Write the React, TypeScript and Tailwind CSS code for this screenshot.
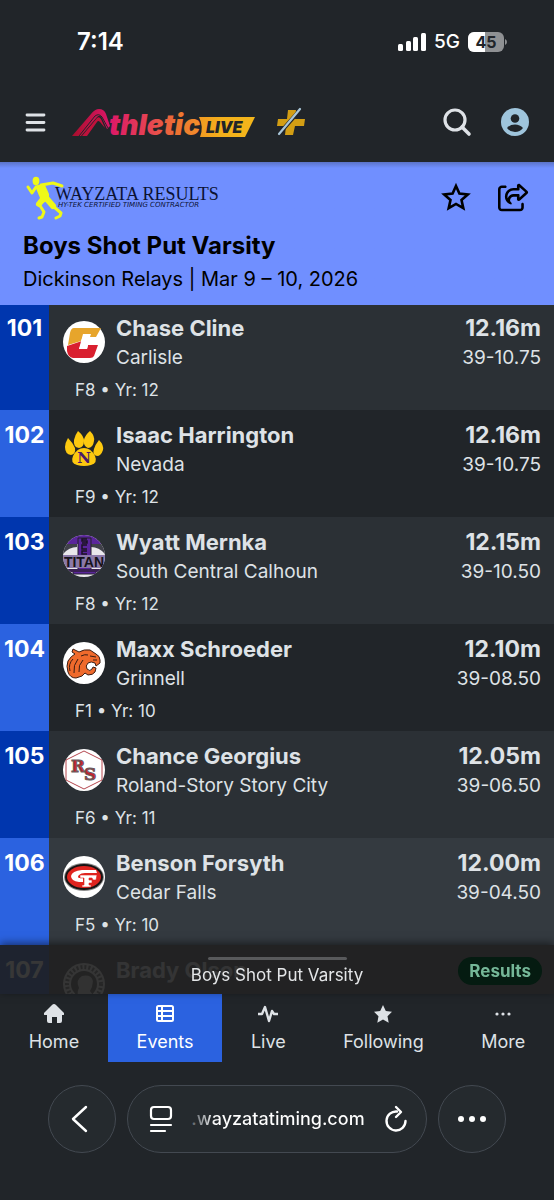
import React, { useState } from "react";
import { FaRegShareFromSquare } from "react-icons/fa6";

interface IAthlete {
    place: number;
    name: string;
    school: string;
    meta: string;
    mark: string;
    imperial: string;
    logo: React.ReactNode;
}

enum NavTab {
    Home = "Home",
    Events = "Events",
    Live = "Live",
    Following = "Following",
    More = "More"
}

function CarlisleLogo() {
    return (
        <svg viewBox="0 0 42 42" className="size-[42px]">
            <circle cx="21" cy="21" r="21" fill="#fff" />
            <path d="M11 7h27l-5 9h-6l1-3h-7l-3 7-13 4 2-12q1-5 4-5z" fill="#e7a52b" />
            <path d="M4 25l15-5-3 8h8l1-4h10l-4 11q-1 2-4 2H10q-5-1-6-7z" fill="#d9202f" />
            <path d="M20 13h7l-1 4h8l-2 7h-7l-1 4h-8z" fill="#fff" />
        </svg>
    );
}

function NevadaLogo() {
    return (
        <svg viewBox="0 0 42 42" className="size-[42px]">
            <g fill="#fdc90f">
                <path d="M5 10q5 5 7 10 1 6-4 7-6-1-6-8 0-4 3-9z" />
                <path d="M15 3q6 5 6 10 0 6-5 7-6-1-5-8 1-5 4-9z" />
                <path d="M27 3q5 5 4 10-1 7-6 7-5-2-4-8 1-5 6-9z" />
                <path d="M36 12q5 5 4 10-2 6-6 6-5-1-3-7 1-4 5-9z" />
                <path d="M21 20q7 0 11 8 3 7-4 9-7 2-14 0-7-2-4-9 4-8 11-8z" />
            </g>
            <text x="21" y="35" textAnchor="middle" fill="#4b1a6b" className="font-['DejaVu_Serif',serif] text-[15px] font-bold">N</text>
        </svg>
    );
}

function TitanLogo() {
    return (
        <svg viewBox="0 0 42 42" className="size-[42px]">
            <clipPath id="titanClip"><circle cx="21" cy="21" r="21" /></clipPath>
            <g clipPath="url(#titanClip)">
                <rect width="42" height="42" fill="#e9e7ec" />
                <path d="M0 0h42v9H0z" fill="#5a259b" />
                <path d="M0 9h14v3q-8 0-14 7zM42 9H28v3q8 0 14 7z" fill="#40414a" />
                <path d="M15 3h13v33h5v3H10v-3h5z" fill="#5a259b" stroke="#25212c" />
                <path d="M0 20h42v13H0z" fill="#8b79a8" />
                <path d="M3 34h36v3H3z" fill="#392052" />
                <text x="21" y="32" textAnchor="middle" fill="#15121b" className="font-['Liberation_Sans',sans-serif] text-[14px] font-bold">TITAN</text>
                <g fill="none" stroke="#1b1322" strokeWidth="1.5">
                    <path d="M24 4h-5v2h5v2h-5M24 10h-5v4h5M24 16h-5v3h5" />
                </g>
            </g>
        </svg>
    );
}

function GrinnellLogo() {
    return (
        <svg viewBox="0 0 42 42" className="size-[42px]">
            <circle cx="21" cy="21" r="21" fill="#fff" />
            <path d="M10 7l6 3q5-3 11-2l6 4q4 2 4 6v3l-4 3-1-3q-4-2-7 0-3 3-1 6 3 3 5 0l1-2 3 1-1 4q-2 3-7 3l-3-2-3 3-6 2q-6 0-8-6-2-6 0-11 3-5 7-7l-3-2z" fill="#ef6a2c" stroke="#3a1c12" strokeWidth="1" />
            <path d="M10 17q-5 5-3 12M15 17q-5 6-4 14M20 18q-5 5-4 12M27 14l6 1M18 14q4-2 7-1M30 18h4" fill="none" stroke="#3a1c12" strokeWidth="1" />
        </svg>
    );
}

function RolandStoryLogo() {
    return (
        <svg viewBox="0 0 42 42" className="size-[42px]">
            <circle cx="21" cy="21" r="21" fill="#fff" />
            <path d="M21 2l18 9v20l-18 9-18-9V11z" fill="none" stroke="#b5474f" strokeWidth="1" />
            <g fill="#c4242f" stroke="#6b5a5c" strokeWidth="1" className="font-['DejaVu_Serif',serif] text-[17px] font-bold">
                <text x="8" y="23">R</text>
                <text x="21" y="31">S</text>
            </g>
        </svg>
    );
}

function CedarFallsLogo() {
    return (
        <svg viewBox="0 0 42 42" className="size-[42px]">
            <circle cx="21" cy="21" r="21" fill="#fff" />
            <ellipse cx="21" cy="21" rx="20" ry="14" fill="#8b8b8b" />
            <ellipse cx="21" cy="21" rx="19" ry="13" fill="#171414" />
            <ellipse cx="21" cy="21" rx="17" ry="11" fill="#e0241f" />
            <path d="M33 14H19q-10 1-11 6 0 5 8 6h4v-4h-4q-2-1 0-3 2-2 6-2h12z" fill="#fff" />
            <path d="M17 19h17l-1 5h-3l-1-2h-3v2h3v3h-3v2h2v2h-9v-2h2v-7h-4z" fill="#fff" stroke="#e0241f" strokeWidth=".6" />
        </svg>
    );
}

function SealLogo() {
    return (
        <svg viewBox="0 0 42 42" className="size-[42px]">
            <circle cx="21" cy="21" r="21" fill="#e8e8e8" />
            <circle cx="21" cy="21" r="17" fill="none" stroke="#555" strokeWidth="4" strokeDasharray="2 2" />
            <circle cx="21" cy="21" r="13" fill="#333" />
            <path d="M15 34q-1-6 1-9-4-8 3-12 9-2 11 5l-1 6-2 4q3 3 3 6z" fill="#c8c8c8" />
        </svg>
    );
}

const athletes: IAthlete[] = [
    { place: 101, name: "Chase Cline", school: "Carlisle", meta: "F8 • Yr: 12", mark: "12.16m", imperial: "39-10.75", logo: <CarlisleLogo /> },
    { place: 102, name: "Isaac Harrington", school: "Nevada", meta: "F9 • Yr: 12", mark: "12.16m", imperial: "39-10.75", logo: <NevadaLogo /> },
    { place: 103, name: "Wyatt Mernka", school: "South Central Calhoun", meta: "F8 • Yr: 12", mark: "12.15m", imperial: "39-10.50", logo: <TitanLogo /> },
    { place: 104, name: "Maxx Schroeder", school: "Grinnell", meta: "F1 • Yr: 10", mark: "12.10m", imperial: "39-08.50", logo: <GrinnellLogo /> },
    { place: 105, name: "Chance Georgius", school: "Roland-Story Story City", meta: "F6 • Yr: 11", mark: "12.05m", imperial: "39-06.50", logo: <RolandStoryLogo /> },
    { place: 106, name: "Benson Forsyth", school: "Cedar Falls", meta: "F5 • Yr: 10", mark: "12.00m", imperial: "39-04.50", logo: <CedarFallsLogo /> },
    { place: 107, name: "Brady Olson", school: "", meta: "", mark: "", imperial: "", logo: <SealLogo /> }
];

function StatusBar() {
    return (
        <div className="flex items-center justify-between pt-[26px] pr-[47px] pl-[77px] text-white">
            <span className="text-[24px] leading-8 font-semibold">7:14</span>
            <div className="flex items-center gap-2">
                <svg viewBox="0 0 28 18" className="h-[18px] w-7" fill="currentColor">
                    <rect x="0" y="11" width="5" height="7" rx="1.5" />
                    <rect x="8" y="8" width="5" height="10" rx="1.5" />
                    <rect x="15" y="4" width="5" height="14" rx="1.5" />
                    <rect x="23" y="0" width="5" height="18" rx="1.5" />
                </svg>
                <span className="text-[19px] leading-8 font-medium">5G</span>
                <svg viewBox="0 0 39 20" className="h-5 w-[39px]">
                    <clipPath id="battery"><rect width="36" height="20" rx="6" /></clipPath>
                    <g clipPath="url(#battery)">
                        <rect width="36" height="20" fill="#8f9193" />
                        <rect width="17" height="20" fill="#fff" />
                    </g>
                    <path d="M37 7q2 1 2 3t-2 3z" fill="#8f9193" />
                    <text x="18" y="16" textAnchor="middle" fill="#212529" className="text-[16px] font-bold">45</text>
                </svg>
            </div>
        </div>
    );
}

function AthleticLiveLogo() {
    return (
        <svg viewBox="0 -4 184 40" className="h-10 w-[184px]" role="img" aria-label="AthleticLIVE">
            <defs>
                <linearGradient id="brand" gradientUnits="userSpaceOnUse" x1="36" x2="130" y1="0" y2="0">
                    <stop offset="0" stopColor="#dc1668" />
                    <stop offset=".45" stopColor="#e64553" />
                    <stop offset=".75" stopColor="#ee7430" />
                    <stop offset="1" stopColor="#f2932a" />
                </linearGradient>
                <linearGradient id="peak" x1="0" x2="1" y1="0" y2="0">
                    <stop offset="0" stopColor="#a80f2c" />
                    <stop offset="1" stopColor="#dc1668" />
                </linearGradient>
                <linearGradient id="tag" x1="0" x2="1" y1="0" y2="0">
                    <stop offset="0" stopColor="#f29a22" />
                    <stop offset=".4" stopColor="#f3b01b" />
                    <stop offset="1" stopColor="#f3b61b" />
                </linearGradient>
            </defs>
            <path d="M0 30L19 8q4-5 8-5 5 0 7 5l4 12-3 3-5-11q-2-4-5-1L9 30z" fill="url(#peak)" />
            <path d="M10 30L25 12q2-2 4 1l4 9-5-6q-2-2-3 0L15 30z" fill="#c0123c" />
            <path d="M7 30L23 10q4-3 7 1l6 11" fill="none" stroke="#212529" strokeWidth="1" />
            <path d="M127 11h56l-10 20h-45q4-10-1-20z" fill="url(#tag)" />
            <text x="37" y="29" fill="url(#brand)" className="text-[28px] font-black italic">thletic</text>
            <text x="134" y="27" fill="#212529" className="text-[16px] font-black italic">LIVE</text>
        </svg>
    );
}

function Header() {
    return (
        <header className="flex items-center pt-11 pr-6 pb-5 pl-6">
            <button type="button" aria-label="Open menu" className="mr-6">
                <svg viewBox="0 0 24 24" className="size-6" stroke="#dee2e6" strokeWidth="2.8" strokeLinecap="round">
                    <path d="M3 5h17M3 12.500h17M3 20h17" />
                </svg>
            </button>
            <a href="#home"><AthleticLiveLogo /></a>
            <svg viewBox="0 0 30 30" className="ml-5 size-[30px]">
                <path d="M12 3h8l-1 9h10l-1 7h-9l-2 9H9l1-9H1l1-7h9z" fill="#d39e14" />
                <path d="M2 28L25 2" stroke="#212529" strokeWidth="4" />
                <path d="M3 27L24 2" stroke="#a9c6d8" strokeWidth="2.2" strokeLinecap="round" />
            </svg>
            <div className="ml-auto flex items-center gap-7">
                <button type="button" aria-label="Search">
                    <svg viewBox="0 0 30 30" className="size-[30px]" fill="none" stroke="#dee2e6" strokeLinecap="round">
                        <circle cx="13" cy="13" r="10" strokeWidth="3.2" />
                        <path d="M20 20l7 7" strokeWidth="3.6" />
                    </svg>
                </button>
                <button type="button" aria-label="Account">
                    <svg viewBox="0 0 30 30" className="size-[30px]">
                        <circle cx="15" cy="15" r="14" fill="#9fc5dc" />
                        <circle cx="15" cy="11.5" r="4.3" fill="#212529" />
                        <path d="M7 21q3-3.500 8-3.500t8 3.500q-3 4-8 4t-8-4z" fill="#212529" />
                    </svg>
                </button>
            </div>
        </header>
    );
}

function WayzataLogo() {
    return (
        <svg viewBox="0 0 204 44" className="h-11 w-[204px]" role="img" aria-label="Wayzata Results">
            <ellipse cx="13" cy="5" rx="3.400" ry="4.200" fill="#eef818" />
            <path d="M12 10q4-2 10-1l4 9 0 6-6 3-3-5z" fill="#eef818" />
            <g fill="none" stroke="#eef818" strokeLinecap="round" strokeLinejoin="round">
                <path d="M13 11l-4 6-4-6" strokeWidth="3" />
                <path d="M18 9l12-2 9 3" strokeWidth="3" />
                <path d="M20 23l-4 5" strokeWidth="6" />
                <path d="M16 28l5 8-2 5-3 1" strokeWidth="3" />
                <path d="M24 23l6 7" strokeWidth="6" />
                <path d="M31 31l7 6-1 3-4 2" strokeWidth="3" />
            </g>
            <g fill="#0b1233" className="font-['Liberation_Serif',serif]">
                <text x="32" y="24" className="text-[18px]">WAYZATA RESULTS</text>
                <text x="35" y="31" className="font-['DejaVu_Sans',sans-serif] text-[7px] italic">HY-TEK CERTIFIED TIMING CONTRACTOR</text>
            </g>
        </svg>
    );
}

function EventBanner() {
    const [isFollowing, setIsFollowing] = useState(false);

    return (
        <section className="bg-linear-to-b from-[#5b73c8] to-[#708fff] to-[6px] px-[23px] pt-[14px] pb-[11px] text-black">
            <div className="flex justify-between">
                <WayzataLogo />
                <div className="flex items-center gap-[26px] pr-0.5 pb-0.5">
                    <button type="button" aria-label="Follow event" aria-pressed={isFollowing} onClick={() => setIsFollowing(!isFollowing)}>
                        <svg viewBox="0 0 32 32" className="size-8" fill={isFollowing ? "currentColor" : "none"} stroke="currentColor" strokeWidth="2.6">
                            <path d="M16 5l3.400 7.600 8.400.8-6.300 5.600 1.800 8.200-7.300-4.300-7.300 4.300 1.800-8.200-6.300-5.600 8.400-.8z" />
                        </svg>
                    </button>
                    <button type="button" aria-label="Share">
                        <FaRegShareFromSquare size={31} />
                    </button>
                </div>
            </div>
            <h1 className="mt-[10px] text-[24px] leading-8 font-bold">Boys Shot Put Varsity</h1>
            <p className="mt-0.5 text-[20px] leading-[30px]">Dickinson Relays | Mar 9 – 10, 2026</p>
        </section>
    );
}

function AthleteRow({ athlete }: { athlete: IAthlete }) {
    const { place, name, school, meta, mark, imperial, logo } = athlete;

    return (
        <li className="group flex h-[107px] text-[#dee2e6] odd:bg-[#2b3035] even:bg-[#212529] nth-[6]:bg-[#343a40]">
            <div className="w-[49px] shrink-0 pt-[10px] text-center text-[23px] leading-[30px] font-bold text-white group-odd:bg-[#0036ae] group-even:bg-[#2b62e0]">
                {place}
            </div>
            <div className="flex-1 pt-[10px] pr-[13px] pl-[14px]">
                <div className="flex">
                    <div className="mr-[11px] h-[60px] pt-2">{logo}</div>
                    <div className="flex-1">
                        <div className="text-[22px] leading-[30px] font-bold">{name}</div>
                        <div className="text-[19px] leading-[30px]">{school}</div>
                    </div>
                    <div className="text-right">
                        <div className="text-[23px] leading-[30px] font-bold">{mark}</div>
                        <div className="text-[19px] leading-[30px]">{imperial}</div>
                    </div>
                </div>
                <div className="mt-[7px] pl-3 text-[17px] leading-5">{meta}</div>
            </div>
        </li>
    );
}

function ResultsSheet() {
    return (
        <div className="absolute inset-x-0 bottom-0 flex h-[49px] flex-col items-center bg-[#212121]/90 pt-3 shadow-[0_-2px_8px_rgba(0,0,0,0.5)]">
            <div className="h-[3px] w-[139px] rounded-full bg-[#58595b]" />
            <div className="mt-[3px] text-[17px] leading-6 text-[#e4e6e8]">Boys Shot Put Varsity</div>
            <button type="button" className="absolute top-3 right-3 h-7 rounded-full bg-[#051b11] px-[11px] text-[17px] leading-7 font-bold text-[#75b798]">
                Results
            </button>
        </div>
    );
}

const navIcons: Record<NavTab, React.ReactNode> = {
    [NavTab.Home]: <path d="M10 0Q11 0 12 1l8 8q1 2-1 2h-1v6q0 2-2 2h-3v-6H8v6H5q-2 0-2-2v-6H1q-2 0-1-2l8-8q1-1 2-1z" />,
    [NavTab.Events]: (
        <g fill="none" stroke="currentColor" strokeWidth="2">
            <rect x="2" y="2" width="16" height="15" rx="1.500" />
            <path d="M2 7h16M2 12h16M7 2v15" />
        </g>
    ),
    [NavTab.Live]: <path d="M0 10h4l3-7 4 14 3-10 2 3h4" fill="none" stroke="currentColor" strokeWidth="2.4" strokeLinecap="round" strokeLinejoin="round" />,
    [NavTab.Following]: <path d="M10 1l2.800 6 6.200.8-4.500 4.500 1.200 6.400-5.700-3.100-5.700 3.100 1.200-6.400L1 7.800 7.200 7z" />,
    [NavTab.More]: (
        <g>
            <circle cx="4" cy="10" r="1.600" />
            <circle cx="10" cy="10" r="1.600" />
            <circle cx="16" cy="10" r="1.600" />
        </g>
    )
};

function BottomNav() {
    const [activeTab, setActiveTab] = useState(NavTab.Events);

    return (
        <nav className="flex">
            {Object.values(NavTab).map((tab) => (
                <button
                    key={tab}
                    type="button"
                    onClick={() => setActiveTab(tab)}
                    className={activeTab == tab
                        ? "flex h-[68px] flex-auto flex-col items-center bg-[#2b62e0] pt-[10px] text-white"
                        : "flex h-[68px] flex-auto flex-col items-center pt-[10px] text-[#dee2e6]"}
                >
                    <svg viewBox="0 0 20 20" className="size-5" fill="currentColor">{navIcons[tab]}</svg>
                    <span className="mt-1 text-[18px] leading-7">{tab}</span>
                </button>
            ))}
        </nav>
    );
}

function BrowserBar() {
    return (
        <div className="flex gap-[11px] px-12 pt-[23px] pb-[47px] text-white">
            <button type="button" aria-label="Back" className="flex size-[68px] shrink-0 items-center justify-center rounded-full border border-[#434951] bg-[#252a2e]">
                <svg viewBox="0 0 28 28" className="size-7" fill="none" stroke="currentColor" strokeWidth="2.4" strokeLinecap="round" strokeLinejoin="round">
                    <path d="M18 2L5 14l13 12" />
                </svg>
            </button>
            <div className="flex h-[68px] flex-1 items-center rounded-full border border-[#434951] bg-[#252a2e] pr-[17px] pl-[21px]">
                <button type="button" aria-label="Page menu">
                    <svg viewBox="0 0 24 28" className="h-7 w-6" fill="none" stroke="currentColor" strokeWidth="2.2" strokeLinecap="round">
                        <rect x="2" y="2" width="20" height="12" rx="3" />
                        <path d="M2 20h20M2 26h14" />
                    </svg>
                </button>
                <div className="flex-1 text-center text-[18px] leading-6 font-medium">
                    <span className="text-[#6b7075]">.</span>
                    <span className="bg-linear-to-r from-[#7b8085] to-white to-[18px] bg-clip-text text-transparent">wayzatatiming.com</span>
                </div>
                <button type="button" aria-label="Reload">
                    <svg viewBox="0 0 26 28" className="h-7 w-[26px]" fill="none" stroke="currentColor" strokeWidth="2.400" strokeLinecap="round" strokeLinejoin="round">
                        <path d="M14 6.500A9.500 9.500 0 1 0 22.500 16M13 2l5 5-5 5" />
                    </svg>
                </button>
            </div>
            <button type="button" aria-label="More options" className="flex size-[68px] shrink-0 items-center justify-center rounded-full border border-[#434951] bg-[#252a2e]">
                <svg viewBox="0 0 28 8" className="h-2 w-7" fill="currentColor">
                    <circle cx="3" cy="4" r="3" />
                    <circle cx="14" cy="4" r="3" />
                    <circle cx="25" cy="4" r="3" />
                </svg>
            </button>
        </div>
    );
}

export default function App() {
    return (
        <div className="flex h-screen flex-col bg-[#212529] font-['Inter',sans-serif]">
            <StatusBar />
            <Header />
            <EventBanner />
            <main className="relative min-h-0 flex-1">
                <div className="h-full overflow-y-auto [scrollbar-width:none]">
                    <ul className="-mt-0.5">
                        {athletes.map((athlete) => (
                            <AthleteRow key={athlete.place} athlete={athlete} />
                        ))}
                    </ul>
                </div>
                <ResultsSheet />
            </main>
            <footer>
                <BottomNav />
                <BrowserBar />
            </footer>
        </div>
    );
}
